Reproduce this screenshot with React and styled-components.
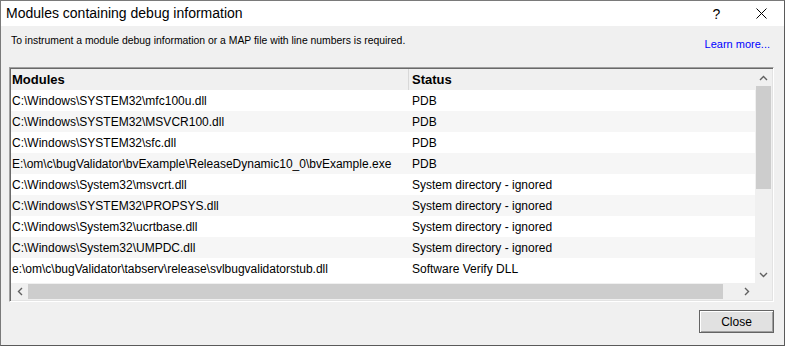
import styled, { createGlobalStyle } from "styled-components";

const GlobalStyle = createGlobalStyle`
  html, body {
    margin: 0;
    padding: 0;
    background: #fff;
  }
  * {
    box-sizing: border-box;
  }
`;

const rows = [
  ["C:\\Windows\\SYSTEM32\\mfc100u.dll", "PDB"],
  ["C:\\Windows\\SYSTEM32\\MSVCR100.dll", "PDB"],
  ["C:\\Windows\\SYSTEM32\\sfc.dll", "PDB"],
  ["E:\\om\\c\\bugValidator\\bvExample\\ReleaseDynamic10_0\\bvExample.exe", "PDB"],
  ["C:\\Windows\\System32\\msvcrt.dll", "System directory - ignored"],
  ["C:\\Windows\\SYSTEM32\\PROPSYS.dll", "System directory - ignored"],
  ["C:\\Windows\\System32\\ucrtbase.dll", "System directory - ignored"],
  ["C:\\Windows\\System32\\UMPDC.dll", "System directory - ignored"],
  ["e:\\om\\c\\bugValidator\\tabserv\\release\\svlbugvalidatorstub.dll", "Software Verify DLL"],
];

function App() {
  return (
    <>
      <GlobalStyle />
      <Window>
        <TitleBar>
          <Title>Modules containing debug information</Title>
          <TitleButton>?</TitleButton>
          <TitleButton>
            <svg width="11" height="11" viewBox="0 0 11 11">
              <path d="M0.5 0.5 L10.5 10.5 M10.5 0.5 L0.5 10.5" stroke="#000" strokeWidth="1" />
            </svg>
          </TitleButton>
        </TitleBar>
        <Body>
          <InfoRow>
            <Info>To instrument a module debug information or a MAP file with line numbers is required.</Info>
            <LearnMore>Learn more...</LearnMore>
          </InfoRow>
          <ListBox>
            <ListArea>
              <Header>
                <HeadCell $width={398} $divider>Modules</HeadCell>
                <HeadCell>Status</HeadCell>
              </Header>
              {rows.map(([mod, status], i) => (
                <Row key={mod} $odd={i % 2 === 1}>
                  <Cell $width={398}>{mod}</Cell>
                  <Cell $pad={3}>{status}</Cell>
                </Row>
              ))}
            </ListArea>
            <VScroll>
              <Arrow>
                <svg width="9" height="6" viewBox="0 0 9 6">
                  <polyline points="1,5 4.5,1.5 8,5" fill="none" stroke="#606060" strokeWidth="1.4" />
                </svg>
              </Arrow>
              <VTrack>
                <VThumb />
              </VTrack>
              <Arrow>
                <svg width="9" height="6" viewBox="0 0 9 6">
                  <polyline points="1,1 4.5,4.5 8,1" fill="none" stroke="#606060" strokeWidth="1.4" />
                </svg>
              </Arrow>
            </VScroll>
            <HScroll>
              <Arrow>
                <svg width="6" height="9" viewBox="0 0 6 9">
                  <polyline points="5,1 1.5,4.5 5,8" fill="none" stroke="#606060" strokeWidth="1.4" />
                </svg>
              </Arrow>
              <HTrack>
                <HThumb />
              </HTrack>
              <Arrow>
                <svg width="6" height="9" viewBox="0 0 6 9">
                  <polyline points="1,1 4.5,4.5 1,8" fill="none" stroke="#606060" strokeWidth="1.4" />
                </svg>
              </Arrow>
            </HScroll>
            <Corner />
          </ListBox>
          <Footer>
            <Button>Close</Button>
          </Footer>
        </Body>
      </Window>
    </>
  );
}

export default App;

const Window = styled.div`
  width: 785px;
  height: 346px;
  display: flex;
  flex-direction: column;
  border: 1px solid #7a7a7a;
  border-right-color: #5a5a5a;
  border-bottom-color: #5a5a5a;
  font-family: "Liberation Sans", Arial, sans-serif;
`;

const TitleBar = styled.div`
  height: 25px;
  background: #fff;
  display: flex;
  align-items: center;
  padding-left: 5px;
`;

const Title = styled.div`
  flex: 1;
  font-size: 14px;
  color: #000;
  padding-bottom: 1px;
`;

const TitleButton = styled.div`
  width: 45px;
  height: 25px;
  display: flex;
  align-items: center;
  justify-content: center;
  font-size: 14px;
  color: #000;
`;

const Body = styled.div`
  flex: 1;
  background: #f0f0f0;
  display: flex;
  flex-direction: column;
  padding: 0 10px 0 8px;
`;

const InfoRow = styled.div`
  height: 41px;
  display: flex;
  justify-content: space-between;
  padding-left: 2px;
  padding-top: 9px;
`;

const Info = styled.div`
  font-size: 10.4px;
  color: #000;
`;

const LearnMore = styled.div`
  font-size: 11px;
  color: #0000ff;
  padding-top: 3px;
  padding-right: 4px;
`;

const ListBox = styled.div`
  width: 765px;
  height: 235px;
  border: 1px solid #a0a0a0;
  border-right-color: #fff;
  border-bottom-color: #fff;
  box-shadow: inset 1px 1px 0 #696969, inset -1px -1px 0 #e3e3e3;
  padding: 1px;
  background: #fff;
  display: grid;
  grid-template-columns: 1fr 17px;
  grid-template-rows: 1fr 17px;
`;

const ListArea = styled.div`
  overflow: hidden;
  background: #fff;
`;

const Header = styled.div`
  height: 21px;
  display: flex;
  background: #f0f0f0;
  align-items: center;
`;

const HeadCell = styled.div`
  width: ${(p) => (p.$width ? `${p.$width}px` : "auto")};
  flex: ${(p) => (p.$width ? "none" : "1")};
  height: 100%;
  display: flex;
  align-items: center;
  padding-left: ${(p) => (p.$width ? 1 : 3)}px;
  font-size: 13px;
  font-weight: bold;
  color: #000;
  border-right: ${(p) => (p.$divider ? "1px solid #d8d8d8" : "none")};
`;

const Row = styled.div`
  height: 21px;
  display: flex;
  align-items: center;
  background: ${(p) => (p.$odd ? "#f6f6f6" : "#fff")};
`;

const Cell = styled.div`
  width: ${(p) => (p.$width ? `${p.$width}px` : "auto")};
  flex: none;
  padding-left: ${(p) => p.$pad || 1}px;
  font-size: 12px;
  color: #000;
  white-space: nowrap;
`;

const VScroll = styled.div`
  background: #f0f0f0;
  display: flex;
  flex-direction: column;
`;

const Arrow = styled.div`
  width: 17px;
  height: 17px;
  flex: none;
  display: flex;
  align-items: center;
  justify-content: center;
`;

const VTrack = styled.div`
  flex: 1;
  padding: 0 1px;
`;

const VThumb = styled.div`
  height: 103px;
  background: #cdcdcd;
`;

const HScroll = styled.div`
  background: #f0f0f0;
  display: flex;
`;

const HTrack = styled.div`
  flex: 1;
  padding: 1px 0;
`;

const HThumb = styled.div`
  height: 100%;
  width: 695px;
  background: #cdcdcd;
`;

const Corner = styled.div`
  background: #f0f0f0;
`;

const Footer = styled.div`
  display: flex;
  justify-content: flex-end;
  padding-top: 8px;
`;

const Button = styled.div`
  width: 75px;
  height: 23px;
  border: 1px solid #646464;
  box-shadow: inset 1px 1px 0 #fff, inset -1px -1px 0 #a0a0a0;
  background: #e1e1e1;
  display: flex;
  align-items: center;
  justify-content: center;
  font-size: 12px;
  color: #000;
`;
